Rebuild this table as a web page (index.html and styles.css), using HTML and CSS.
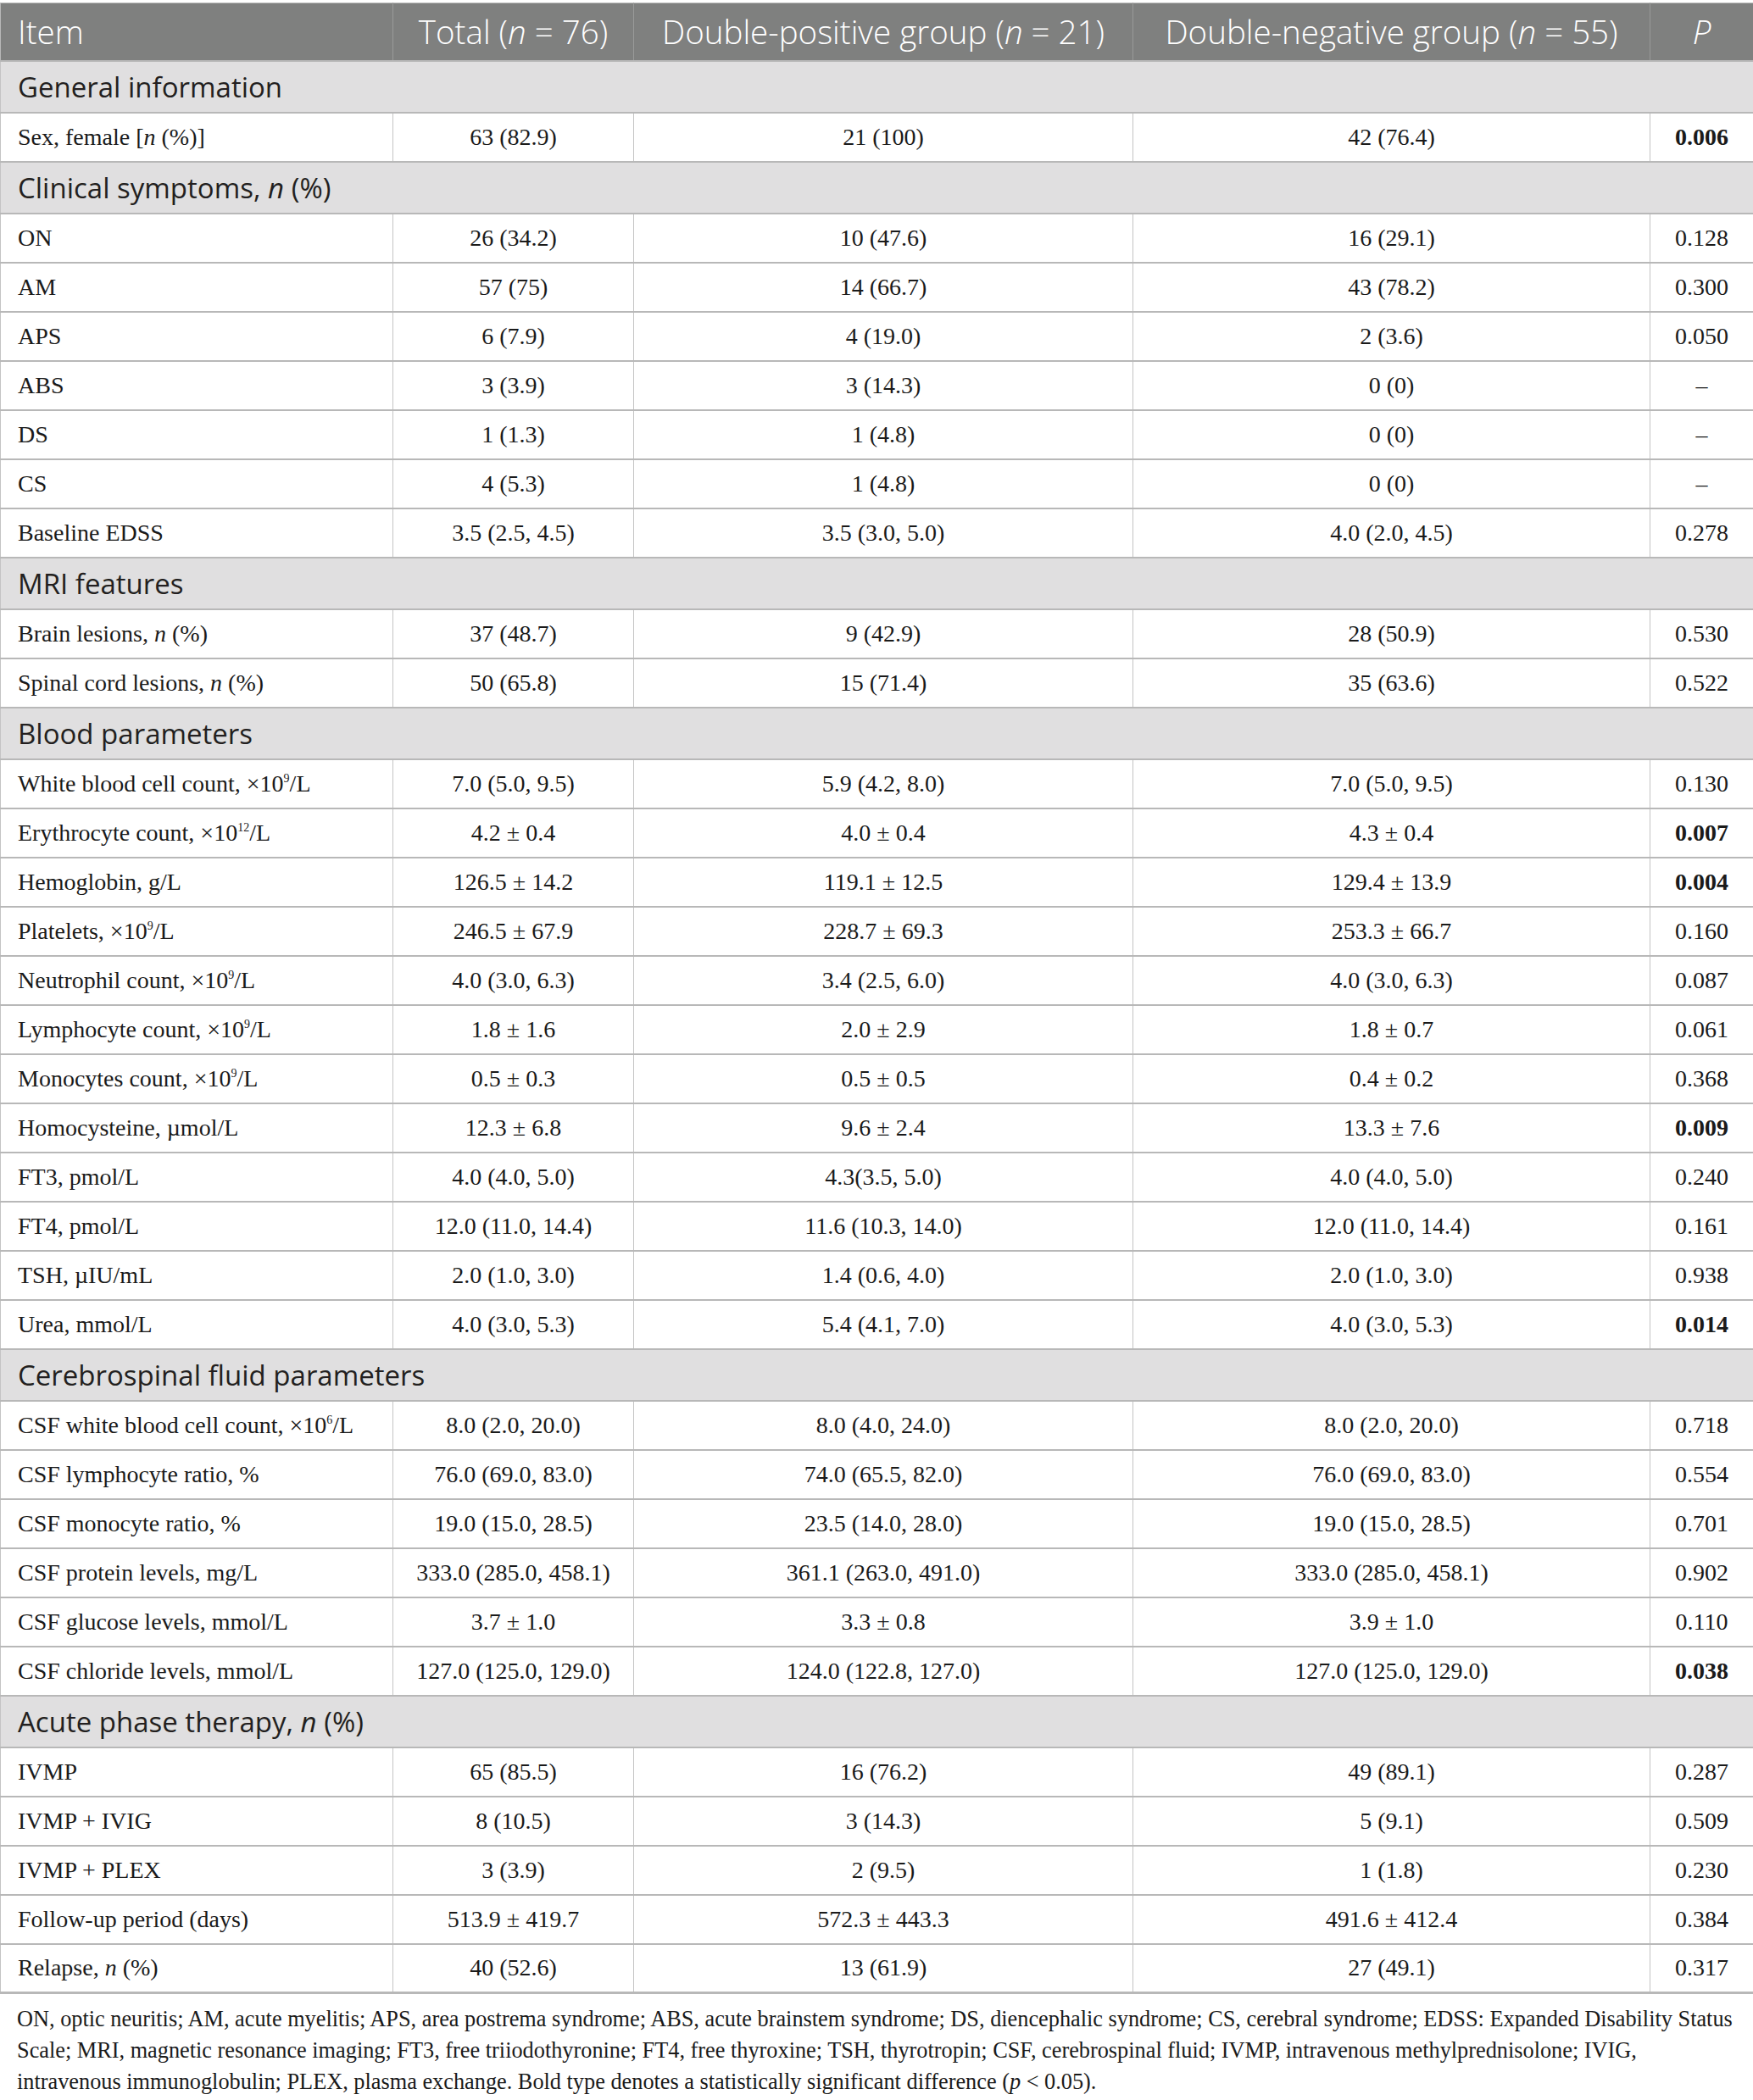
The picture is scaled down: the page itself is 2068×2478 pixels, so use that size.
FILE: index.html
```html
<!DOCTYPE html>
<html lang="en">
<head>
    <meta charset="UTF-8">
    <title>Table 1 - Clinical characteristics</title>
    <link rel="stylesheet" href="styles.css">
</head>
<body>
    <table class="data-table">
        <colgroup>
            <col class="col-item">
            <col class="col-total">
            <col class="col-pos">
            <col class="col-neg">
            <col class="col-p">
        </colgroup>
        <thead>
            <tr>
                <th class="first">Item</th>
                <th>Total (<i>n</i> = 76)</th>
                <th>Double-positive group (<i>n</i> = 21)</th>
                <th>Double-negative group (<i>n</i> = 55)</th>
                <th><i>P</i></th>
            </tr>
        </thead>
        <tbody>
            <tr class="group"><td colspan="5">General information</td></tr>
            <tr><td>Sex, female [<i>n</i> (%)]</td><td>63 (82.9)</td><td>21 (100)</td><td>42 (76.4)</td><td><b>0.006</b></td></tr>

            <tr class="group"><td colspan="5">Clinical symptoms, <i>n</i> (%)</td></tr>
            <tr><td>ON</td><td>26 (34.2)</td><td>10 (47.6)</td><td>16 (29.1)</td><td>0.128</td></tr>
            <tr><td>AM</td><td>57 (75)</td><td>14 (66.7)</td><td>43 (78.2)</td><td>0.300</td></tr>
            <tr><td>APS</td><td>6 (7.9)</td><td>4 (19.0)</td><td>2 (3.6)</td><td>0.050</td></tr>
            <tr><td>ABS</td><td>3 (3.9)</td><td>3 (14.3)</td><td>0 (0)</td><td>–</td></tr>
            <tr><td>DS</td><td>1 (1.3)</td><td>1 (4.8)</td><td>0 (0)</td><td>–</td></tr>
            <tr><td>CS</td><td>4 (5.3)</td><td>1 (4.8)</td><td>0 (0)</td><td>–</td></tr>
            <tr><td>Baseline EDSS</td><td>3.5 (2.5, 4.5)</td><td>3.5 (3.0, 5.0)</td><td>4.0 (2.0, 4.5)</td><td>0.278</td></tr>

            <tr class="group"><td colspan="5">MRI features</td></tr>
            <tr><td>Brain lesions, <i>n</i> (%)</td><td>37 (48.7)</td><td>9 (42.9)</td><td>28 (50.9)</td><td>0.530</td></tr>
            <tr><td>Spinal cord lesions, <i>n</i> (%)</td><td>50 (65.8)</td><td>15 (71.4)</td><td>35 (63.6)</td><td>0.522</td></tr>

            <tr class="group"><td colspan="5">Blood parameters</td></tr>
            <tr><td>White blood cell count, ×10<sup>9</sup>/L</td><td>7.0 (5.0, 9.5)</td><td>5.9 (4.2, 8.0)</td><td>7.0 (5.0, 9.5)</td><td>0.130</td></tr>
            <tr><td>Erythrocyte count, ×10<sup>12</sup>/L</td><td>4.2 ± 0.4</td><td>4.0 ± 0.4</td><td>4.3 ± 0.4</td><td><b>0.007</b></td></tr>
            <tr><td>Hemoglobin, g/L</td><td>126.5 ± 14.2</td><td>119.1 ± 12.5</td><td>129.4 ± 13.9</td><td><b>0.004</b></td></tr>
            <tr><td>Platelets, ×10<sup>9</sup>/L</td><td>246.5 ± 67.9</td><td>228.7 ± 69.3</td><td>253.3 ± 66.7</td><td>0.160</td></tr>
            <tr><td>Neutrophil count, ×10<sup>9</sup>/L</td><td>4.0 (3.0, 6.3)</td><td>3.4 (2.5, 6.0)</td><td>4.0 (3.0, 6.3)</td><td>0.087</td></tr>
            <tr><td>Lymphocyte count, ×10<sup>9</sup>/L</td><td>1.8 ± 1.6</td><td>2.0 ± 2.9</td><td>1.8 ± 0.7</td><td>0.061</td></tr>
            <tr><td>Monocytes count, ×10<sup>9</sup>/L</td><td>0.5 ± 0.3</td><td>0.5 ± 0.5</td><td>0.4 ± 0.2</td><td>0.368</td></tr>
            <tr><td>Homocysteine, µmol/L</td><td>12.3 ± 6.8</td><td>9.6 ± 2.4</td><td>13.3 ± 7.6</td><td><b>0.009</b></td></tr>
            <tr><td>FT3, pmol/L</td><td>4.0 (4.0, 5.0)</td><td>4.3(3.5, 5.0)</td><td>4.0 (4.0, 5.0)</td><td>0.240</td></tr>
            <tr><td>FT4, pmol/L</td><td>12.0 (11.0, 14.4)</td><td>11.6 (10.3, 14.0)</td><td>12.0 (11.0, 14.4)</td><td>0.161</td></tr>
            <tr><td>TSH, µIU/mL</td><td>2.0 (1.0, 3.0)</td><td>1.4 (0.6, 4.0)</td><td>2.0 (1.0, 3.0)</td><td>0.938</td></tr>
            <tr><td>Urea, mmol/L</td><td>4.0 (3.0, 5.3)</td><td>5.4 (4.1, 7.0)</td><td>4.0 (3.0, 5.3)</td><td><b>0.014</b></td></tr>

            <tr class="group"><td colspan="5">Cerebrospinal fluid parameters</td></tr>
            <tr><td>CSF white blood cell count, ×10<sup>6</sup>/L</td><td>8.0 (2.0, 20.0)</td><td>8.0 (4.0, 24.0)</td><td>8.0 (2.0, 20.0)</td><td>0.718</td></tr>
            <tr><td>CSF lymphocyte ratio, %</td><td>76.0 (69.0, 83.0)</td><td>74.0 (65.5, 82.0)</td><td>76.0 (69.0, 83.0)</td><td>0.554</td></tr>
            <tr><td>CSF monocyte ratio, %</td><td>19.0 (15.0, 28.5)</td><td>23.5 (14.0, 28.0)</td><td>19.0 (15.0, 28.5)</td><td>0.701</td></tr>
            <tr><td>CSF protein levels, mg/L</td><td>333.0 (285.0, 458.1)</td><td>361.1 (263.0, 491.0)</td><td>333.0 (285.0, 458.1)</td><td>0.902</td></tr>
            <tr><td>CSF glucose levels, mmol/L</td><td>3.7 ± 1.0</td><td>3.3 ± 0.8</td><td>3.9 ± 1.0</td><td>0.110</td></tr>
            <tr><td>CSF chloride levels, mmol/L</td><td>127.0 (125.0, 129.0)</td><td>124.0 (122.8, 127.0)</td><td>127.0 (125.0, 129.0)</td><td><b>0.038</b></td></tr>

            <tr class="group"><td colspan="5">Acute phase therapy, <i>n</i> (%)</td></tr>
            <tr><td>IVMP</td><td>65 (85.5)</td><td>16 (76.2)</td><td>49 (89.1)</td><td>0.287</td></tr>
            <tr><td>IVMP + IVIG</td><td>8 (10.5)</td><td>3 (14.3)</td><td>5 (9.1)</td><td>0.509</td></tr>
            <tr><td>IVMP + PLEX</td><td>3 (3.9)</td><td>2 (9.5)</td><td>1 (1.8)</td><td>0.230</td></tr>
            <tr><td>Follow-up period (days)</td><td>513.9 ± 419.7</td><td>572.3 ± 443.3</td><td>491.6 ± 412.4</td><td>0.384</td></tr>
            <tr><td>Relapse, <i>n</i> (%)</td><td>40 (52.6)</td><td>13 (61.9)</td><td>27 (49.1)</td><td>0.317</td></tr>
        </tbody>
    </table>

    <p class="table-note">ON, optic neuritis; AM, acute myelitis; APS, area postrema syndrome; ABS, acute brainstem syndrome; DS, diencephalic syndrome; CS, cerebral syndrome; EDSS: Expanded Disability Status Scale; MRI, magnetic resonance imaging; FT3, free triiodothyronine; FT4, free thyroxine; TSH, thyrotropin; CSF, cerebrospinal fluid; IVMP, intravenous methylprednisolone; IVIG, intravenous immunoglobulin; PLEX, plasma exchange. Bold type denotes a statistically significant difference (<i>p</i>&nbsp;&lt;&nbsp;0.05).</p>
</body>
</html>
```

FILE: styles.css
```css
:root {
    --head-bg: #7f807f;
    --group-bg: #e0dfe0;
    --line: #b8b8b8;
    --text: #1a1a1a;
}

* {
    margin: 0;
    padding: 0;
    box-sizing: border-box;
}

body {
    background: #fff;
    color: var(--text);
    font-family: "Liberation Serif", "Times New Roman", serif;
    padding-top: 3px;
}

.data-table {
    width: 2068px;
    border-collapse: collapse;
    table-layout: fixed;
    border: 1px solid var(--line);
}

.col-item { width: 463px; }
.col-total { width: 284px; }
.col-pos { width: 589px; }
.col-neg { width: 610px; }
.col-p { width: 122px; }

/* header */
thead th {
    background: var(--head-bg);
    color: #fff;
    font-family: "Open Sans", "Noto Sans", sans-serif;
    font-weight: 300;
    font-size: 38.5px;
    text-align: center;
    height: 68px;
    padding: 0 12px;
    border-left: 1px solid #999a99;
    border-bottom: 2px solid var(--line);
    white-space: nowrap;
}

thead th.first {
    text-align: left;
    padding-left: 20px;
    border-left: none;
}

/* body rows */
tbody td {
    height: 58px;
    font-size: 28px;
    text-align: center;
    vertical-align: middle;
    border-left: 1px solid #c4c4c4;
    border-bottom: 2px solid var(--line);
    padding: 0 10px;
    white-space: nowrap;
}

tbody td:first-child {
    text-align: left;
    padding-left: 20px;
}

tbody tr.group td {
    height: 61px;
    background: var(--group-bg);
    font-family: "Open Sans", "Noto Sans", sans-serif;
    font-size: 33px;
    color: #231f20;
    text-align: left;
    padding-left: 20px;
}

tbody tr:last-child td {
    border-bottom: 3px solid var(--line);
}

sup {
    font-size: 0.5em;
    line-height: 0;
    vertical-align: 0.8em;
}

b {
    font-weight: 700;
}

.table-note {
    font-size: 26.3px;
    line-height: 37px;
    padding: 11px 10px 0 20px;
    color: var(--text);
}
```
